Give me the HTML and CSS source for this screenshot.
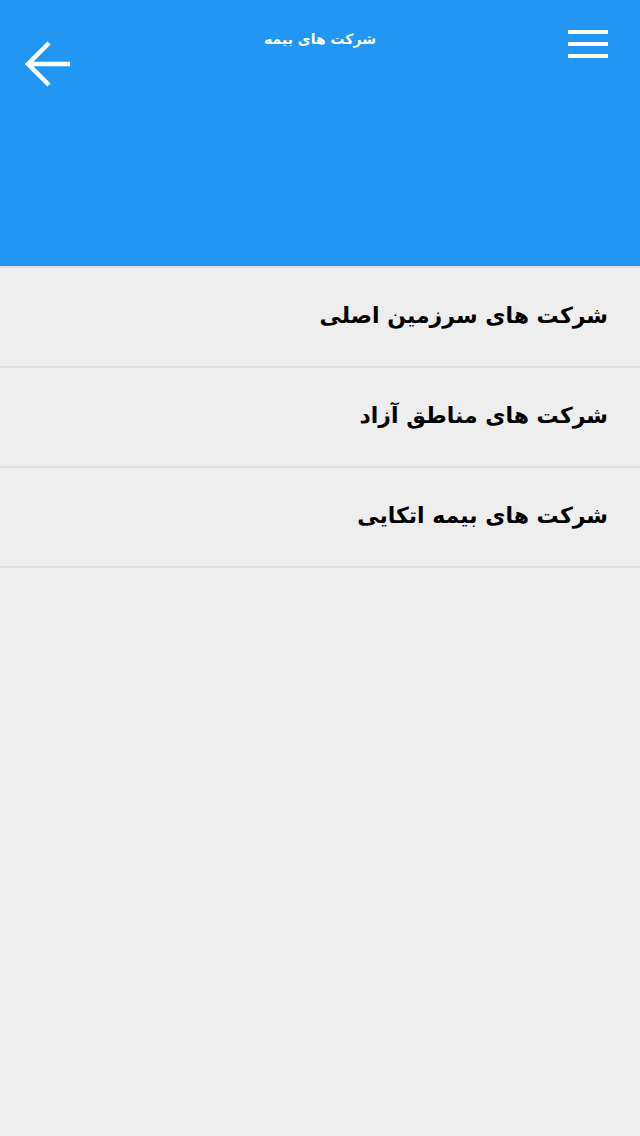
FILE: index.html
```html
<!DOCTYPE html>
<html lang="fa" dir="rtl">
<head>
<meta charset="utf-8">
<title>شرکت های بیمه</title>
<link rel="stylesheet" href="styles.css">
</head>
<body>
<header class="appbar">
  <div class="bar-row">
    <button class="menu-btn" aria-label="menu">
      <span class="menu-line"></span>
      <span class="menu-line"></span>
      <span class="menu-line"></span>
    </button>
    <h1 class="title">شرکت های بیمه</h1>
    <button class="back-btn" aria-label="back">
      <svg width="48" height="46" viewBox="0 0 48 46">
        <path d="M47 23 H5 M26 2 L5 23 L26 44" fill="none" stroke="#fff" stroke-width="4.5" stroke-linecap="butt" stroke-linejoin="miter"/>
      </svg>
    </button>
  </div>
</header>
<ul class="list">
  <li class="item">شرکت های سرزمین اصلی</li>
  <li class="item">شرکت های مناطق آزاد</li>
  <li class="item">شرکت های بیمه اتکایی</li>
</ul>
</body>
</html>
```
FILE: styles.css
```css
html, body {
  margin: 0;
  padding: 0;
}
body {
  background: #eeeeee;
  font-family: "DejaVu Sans", sans-serif;
  width: 640px;
  min-height: 1136px;
}
.appbar {
  background: #2196f3;
  height: 266px;
  box-sizing: border-box;
}
.bar-row {
  display: flex;
  align-items: flex-start;
  justify-content: space-between;
  padding: 30px 32px 0 23px;
  position: relative;
}
.menu-btn {
  background: none;
  border: 0;
  padding: 0;
  width: 40px;
  display: flex;
  flex-direction: column;
  gap: 8px;
}
.menu-line {
  display: block;
  width: 40px;
  height: 4px;
  background: #fff;
}
.title {
  margin: 0;
  color: #fff;
  font-size: 14px;
  font-weight: bold;
  position: absolute;
  left: 0;
  right: 0;
  top: 31px;
  text-align: center;
  pointer-events: none;
}
.back-btn {
  background: none;
  border: 0;
  padding: 0;
  margin-top: 11px;
  width: 48px;
  height: 46px;
}
.back-btn svg {
  display: block;
}
.list {
  list-style: none;
  margin: 0;
  padding: 0;
  border-top: 2px solid #dddddd;
}
.item {
  height: 100px;
  border-bottom: 2px solid #dddddd;
  display: flex;
  align-items: center;
  padding: 0 32px 4px;
  font-size: 22px;
  font-weight: bold;
  color: #000;
  box-sizing: border-box;
}
```
